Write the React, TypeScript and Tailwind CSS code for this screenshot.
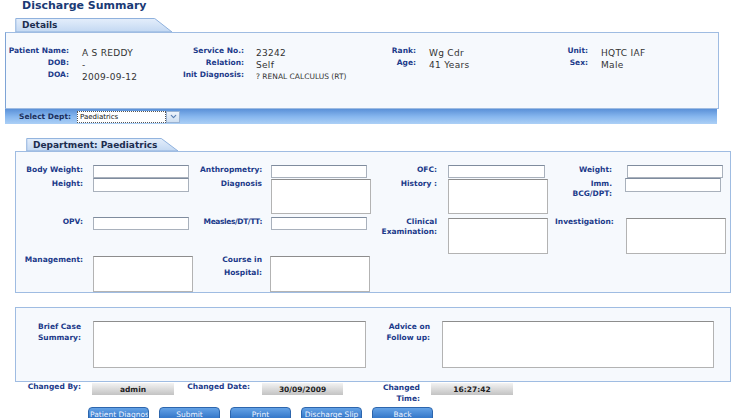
import { ChevronDown } from "lucide-react";

function TabShape({ id }: { id: string }) {
  return (
    <svg className="absolute inset-0 w-full h-full" viewBox="0 0 100 14" preserveAspectRatio="none">
      <defs>
        <linearGradient id={id} x1="0" y1="0" x2="0" y2="1">
          <stop offset="0" stopColor="#e4eefb" />
          <stop offset="1" stopColor="#c3d8f2" />
        </linearGradient>
      </defs>
      <path d="M0.5 14 V0.5 H89 L100 14 Z" fill={`url(#${id})`} stroke="#8fb1dd" strokeWidth="1" vectorEffect="non-scaling-stroke" />
    </svg>
  );
}

const lbl = "font-bold text-[7.5px] text-[#1b3a8a] text-right whitespace-nowrap";
const val = "text-[9px] text-[#333] tracking-[0.3px] pt-[2px] whitespace-nowrap";
const inp = "block bg-white border border-[#a9b1bc] border-t-[#7f8c9e] outline-none";
const area = "block bg-white border border-[#b3b3b3] border-t-[#8d8d8d] outline-none resize-none";

function Btn({ text }: { text: string }) {
  return (
    <div className="w-[61px] h-[14px] overflow-hidden rounded-t-[4px] border border-[#2d66ad] bg-gradient-to-b from-[#64a2e6] to-[#2a6fc3] text-[7.5px] leading-[9px] pt-[2px] text-[#eef4ff] whitespace-nowrap flex justify-center">
      <span>{text}</span>
    </div>
  );
}

function Stamp({ text, w }: { text: string; w: string }) {
  return (
    <div className={`${w} h-[12px] mt-[1px] bg-gradient-to-b from-[#f3f3f3] to-[#c3c3c3] text-[7.5px] font-bold text-[#222] leading-[12px] text-center pt-[1px]`}>
      {text}
    </div>
  );
}

export default function App() {
  return (
    <div className="w-[736px] h-[418px] overflow-hidden bg-white font-['DejaVu_Sans',Verdana,sans-serif]">
      <div className="h-[18px] pl-[22px] text-[11px] leading-[12px] font-bold text-[#1a3a75]">Discharge Summary</div>

      <div className="relative ml-[15px] w-[157px] h-[14px]">
        <TabShape id="tab1" />
        <span className="relative block pl-[7px] text-[9px] font-bold leading-[14px] text-[#1c2d4f]">Details</span>
      </div>

      <div className="ml-[5px] w-[714px] h-[77px] border border-[#9fbce2] border-l-[#7ea4d6] bg-[#f6f9fd] pt-[12px]">
        <div className="grid grid-cols-[76px_88px_86px_94px_79px_91px_81px_1fr] auto-rows-[12px] leading-[12px]">
          <div className={`${lbl} pr-[13px]`}>Patient Name:</div>
          <div className={val}>A S REDDY</div>
          <div className={`${lbl} pr-[12px]`}>Service No.:</div>
          <div className={val}>23242</div>
          <div className={`${lbl} pr-[13px]`}>Rank:</div>
          <div className={val}>Wg Cdr</div>
          <div className={`${lbl} pr-[13px]`}>Unit:</div>
          <div className={val}>HQTC IAF</div>

          <div className={`${lbl} pr-[13px]`}>DOB:</div>
          <div className={val}>-</div>
          <div className={`${lbl} pr-[12px]`}>Relation:</div>
          <div className={val}>Self</div>
          <div className={`${lbl} pr-[13px]`}>Age:</div>
          <div className={val}>41 Years</div>
          <div className={`${lbl} pr-[13px]`}>Sex:</div>
          <div className={val}>Male</div>

          <div className={`${lbl} pr-[13px]`}>DOA:</div>
          <div className={val}>2009-09-12</div>
          <div className={`${lbl} pr-[12px]`}>Init Diagnosis:</div>
          <div className="text-[7.5px] text-[#333] pt-[2px] whitespace-nowrap">? RENAL CALCULUS (RT)</div>
        </div>
      </div>

      <div className="ml-[5px] w-[712px] h-[15px] flex items-center bg-gradient-to-b from-[#5b91d8] via-[#86b6ee] to-[#acd0f6]">
        <span className="pl-[14px] w-[72px] font-bold text-[7.5px] text-[#1b2f5c] whitespace-nowrap">Select Dept:</span>
        <div className="w-[89px] h-[12px] bg-white border border-dotted border-[#555] text-[7px] leading-[10px] pl-[2px] text-[#111]">Paediatrics</div>
        <div className="w-[14px] h-[12px] bg-gradient-to-b from-[#eef4fb] to-[#cfdff1] border border-[#9ab3d3] flex items-center justify-center">
          <ChevronDown size={9} strokeWidth={3} color="#5a7fb3" />
        </div>
      </div>

      <div className="relative mt-[14px] ml-[26px] w-[152px] h-[13px]">
        <TabShape id="tab2" />
        <span className="relative block pl-[7px] text-[9px] font-bold leading-[14px] text-[#1c2d4f] whitespace-nowrap">Department: Paediatrics</span>
      </div>

      <div className="ml-[15px] w-[716px] h-[142px] border border-[#9fbce2] bg-[#f6f9fd] pt-[13px]">
        <div className="grid grid-cols-[77px_107px_71px_109px_68px_107px_71px_1fr] grid-rows-[13px_38px_40px_36px] leading-[10px]">
          <div className={`${lbl} pr-[10px]`}>Body Weight:</div>
          <div><input className={`${inp} w-[96px] h-[13px]`} /></div>
          <div className={`${lbl} pr-[9px]`}>Anthropmetry:</div>
          <div><input className={`${inp} w-[96px] h-[13px]`} /></div>
          <div className={`${lbl} pr-[11px]`}>OFC:</div>
          <div><input className={`${inp} w-[97px] h-[13px]`} /></div>
          <div className={`${lbl} pr-[14px]`}>Weight:</div>
          <div><input className={`${inp} w-[96px] h-[13px] ml-[1px]`} /></div>

          <div className={`${lbl} pr-[10px] pt-[1px]`}>Height:</div>
          <div><input className={`${inp} w-[96px] h-[14px]`} /></div>
          <div className={`${lbl} pr-[9px] pt-[1px]`}>Diagnosis</div>
          <div><textarea className={`${area} w-[100px] h-[35px] mt-[1px]`} /></div>
          <div className={`${lbl} pr-[11px] pt-[1px]`}>History :</div>
          <div><textarea className={`${area} w-[100px] h-[35px] mt-[1px]`} /></div>
          <div className={`${lbl} pr-[14px] pt-[1px]`}>Imm.<br />BCG/DPT:</div>
          <div><input className={`${inp} w-[96px] h-[14px] -ml-[1px]`} /></div>

          <div className={`${lbl} pr-[10px] pt-[1px]`}>OPV:</div>
          <div><input className={`${inp} w-[96px] h-[13px] mt-[1px]`} /></div>
          <div className={`${lbl} pr-[9px] pt-[1px] tracking-[-0.4px]`}>Measles/DT/TT:</div>
          <div><input className={`${inp} w-[96px] h-[13px] mt-[1px]`} /></div>
          <div className={`${lbl} pr-[11px] pt-[1px]`}>Clinical<br />Examination:</div>
          <div><textarea className={`${area} w-[100px] h-[36px] mt-[2px]`} /></div>
          <div className={`${lbl} pr-[14px] pt-[1px]`}>Investigation:</div>
          <div><textarea className={`${area} w-[100px] h-[36px] mt-[2px]`} /></div>

          <div className={`${lbl} pr-[10px] leading-[8px]`}>Management:</div>
          <div><textarea className={`${area} w-[100px] h-[36px]`} /></div>
          <div className={`${lbl} pr-[9px] leading-[13px] -mt-[3px]`}>Course in<br />Hospital:</div>
          <div><textarea className={`${area} w-[100px] h-[36px] -ml-[1px]`} /></div>
        </div>
      </div>

      <div className="mt-[14px] ml-[15px] w-[716px] h-[75px] border border-[#9fbce2] bg-[#f6f9fd] pt-[13px] flex">
        <div className={`${lbl} w-[77px] shrink-0 pr-[12px] leading-[11px]`}>Brief Case<br />Summary:</div>
        <textarea className={`${area} w-[273px] h-[47px]`} />
        <div className={`${lbl} w-[76px] shrink-0 pr-[12px] leading-[11px]`}>Advice on<br />Follow up:</div>
        <textarea className={`${area} w-[272px] h-[47px]`} />
      </div>

      <div className="h-[13px] flex items-start leading-[10px]">
        <div className={`${lbl} w-[92px] pr-[11px]`}>Changed By:</div>
        <Stamp text="admin" w="w-[82px]" />
        <div className={`${lbl} w-[88px] pr-[12px]`}>Changed Date:</div>
        <Stamp text="30/09/2009" w="w-[81px]" />
        <div className={`${lbl} w-[88px] pr-[11px] leading-[11px]`}>Changed<br />Time:</div>
        <Stamp text="16:27:42" w="w-[82px]" />
      </div>

      <div className="mt-[12px] pl-[88px] flex gap-[10px]">
        <div className="w-[61px] h-[14px] overflow-hidden rounded-t-[4px] border border-[#2d66ad] bg-gradient-to-b from-[#64a2e6] to-[#2a6fc3] text-[7.5px] leading-[9px] pt-[2px] pl-[1px] text-[#eef4ff] whitespace-nowrap">
          Patient Diagnos
        </div>
        <Btn text="Submit" />
        <Btn text="Print" />
        <Btn text="Discharge Slip" />
        <Btn text="Back" />
      </div>
    </div>
  );
}
